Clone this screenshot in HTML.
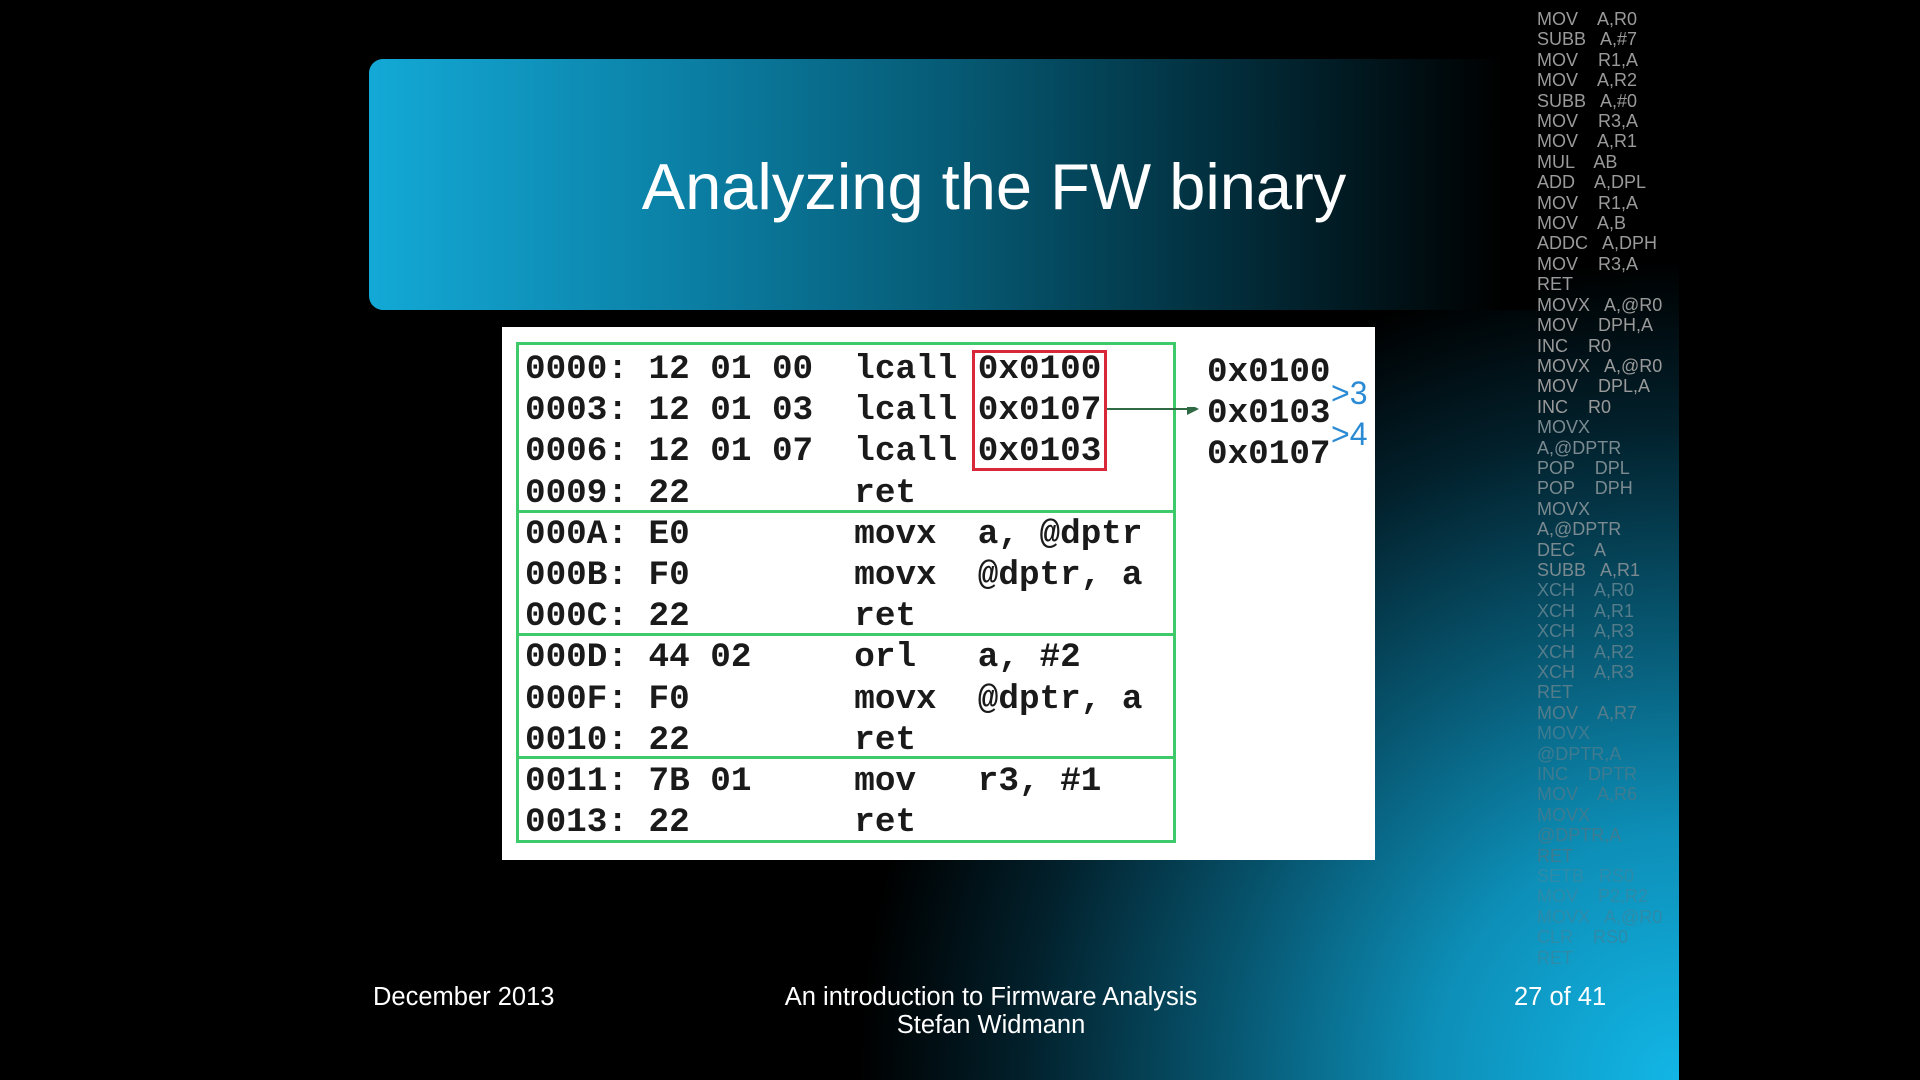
<!DOCTYPE html>
<html><head><meta charset="utf-8"><style>
html,body{margin:0;padding:0;background:#000;}
body{width:1920px;height:1080px;position:relative;overflow:hidden;font-family:"Liberation Sans",sans-serif;}
#slide{position:absolute;left:0;top:0;width:1679px;height:1080px;background:radial-gradient(ellipse 820px 820px at 1679px 1080px,#12b6e6 0%,#0d8fb8 30%,#075670 55%,#02202b 80%,#000 100%);}
#banner{position:absolute;left:369px;top:59px;width:1170px;height:251px;border-radius:14px 0 0 14px;background:linear-gradient(90deg,#13a9d6 0%,#0b7ea3 28%,#065a74 50%,#02303f 72%,#000 97%);}
#title{position:absolute;left:369px;width:1250px;top:149px;text-align:center;color:#fff;font-size:65px;}
#box{position:absolute;left:502px;top:327px;width:873px;height:533px;background:#fff;}
.grp{position:absolute;left:14px;width:660px;border:3px solid #3ec96a;box-sizing:border-box;}
pre{margin:0;font-family:"Liberation Mono",monospace;font-weight:bold;font-size:34.3px;line-height:41.2px;color:#1a1a1a;position:absolute;}
#red{position:absolute;left:470px;top:23px;width:135px;height:121px;border:3px solid #d8283a;box-sizing:border-box;}
#arrow{position:absolute;left:605px;top:80px;}
.bl{position:absolute;color:#2a8ad4;font-family:"Liberation Sans",sans-serif;font-size:32px;}
#asm{position:absolute;left:1537px;top:9px;font-size:18px;line-height:20.4px;white-space:pre;}
.ft{position:absolute;color:#fff;font-size:25.5px;}
</style></head><body>
<div id="slide"></div>
<div id="banner"></div>
<div id="title">Analyzing the FW binary</div>
<div id="box">
<div class="grp" style="top:15px;height:171px"></div>
<div class="grp" style="top:183px;height:126px"></div>
<div class="grp" style="top:306px;height:126px"></div>
<div class="grp" style="top:429px;height:87px"></div>
<div id="red"></div>
<svg id="arrow" width="100" height="20"><line x1="0" y1="2" x2="80" y2="2" stroke="#2f6a45" stroke-width="2"/><polygon points="80,-4 92,2 80,8" fill="#2f6a45"/></svg>
<pre style="left:23px;top:22px">0000: 12 01 00  lcall 0x0100
0003: 12 01 03  lcall 0x0107
0006: 12 01 07  lcall 0x0103
0009: 22        ret
000A: E0        movx  a, @dptr
000B: F0        movx  @dptr, a
000C: 22        ret
000D: 44 02     orl   a, #2
000F: F0        movx  @dptr, a
0010: 22        ret
0011: 7B 01     mov   r3, #1
0013: 22        ret</pre>
<pre style="left:705px;top:25px">0x0100
0x0103
0x0107</pre>
<div class="bl" style="left:829px;top:48px">&gt;3</div>
<div class="bl" style="left:829px;top:89px">&gt;4</div>
</div>
<div id="asm"><div style="color:#9a9a9a">MOV    A,R0
SUBB   A,#7
MOV    R1,A
MOV    A,R2
SUBB   A,#0
MOV    R3,A
MOV    A,R1
MUL    AB
ADD    A,DPL
MOV    R1,A
MOV    A,B
ADDC   A,DPH
MOV    R3,A
RET
MOVX   A,@R0
MOV    DPH,A
INC    R0
MOVX   A,@R0
MOV    DPL,A
INC    R0</div><div style="color:#7a8a90">MOVX
A,@DPTR
POP    DPL
POP    DPH
MOVX
A,@DPTR
DEC    A
SUBB   A,R1</div><div style="color:#557c8a">XCH    A,R0
XCH    A,R1
XCH    A,R3
XCH    A,R2
XCH    A,R3
RET
MOV    A,R7</div><div style="color:#3f7b90">MOVX
@DPTR,A
INC    DPTR
MOV    A,R6
MOVX
@DPTR,A
RET</div><div style="color:#2f8aa8">SETB   RS0
MOV    P2,R2
MOVX   A,@R0
CLR    RS0
RET</div></div>
<div class="ft" style="left:373px;top:983px">December 2013</div>
<div class="ft" style="left:691px;width:600px;top:983px;text-align:center;line-height:28px">An introduction to Firmware Analysis<br>Stefan Widmann</div>
<div class="ft" style="left:1514px;top:983px">27 of 41</div>
</body></html>
